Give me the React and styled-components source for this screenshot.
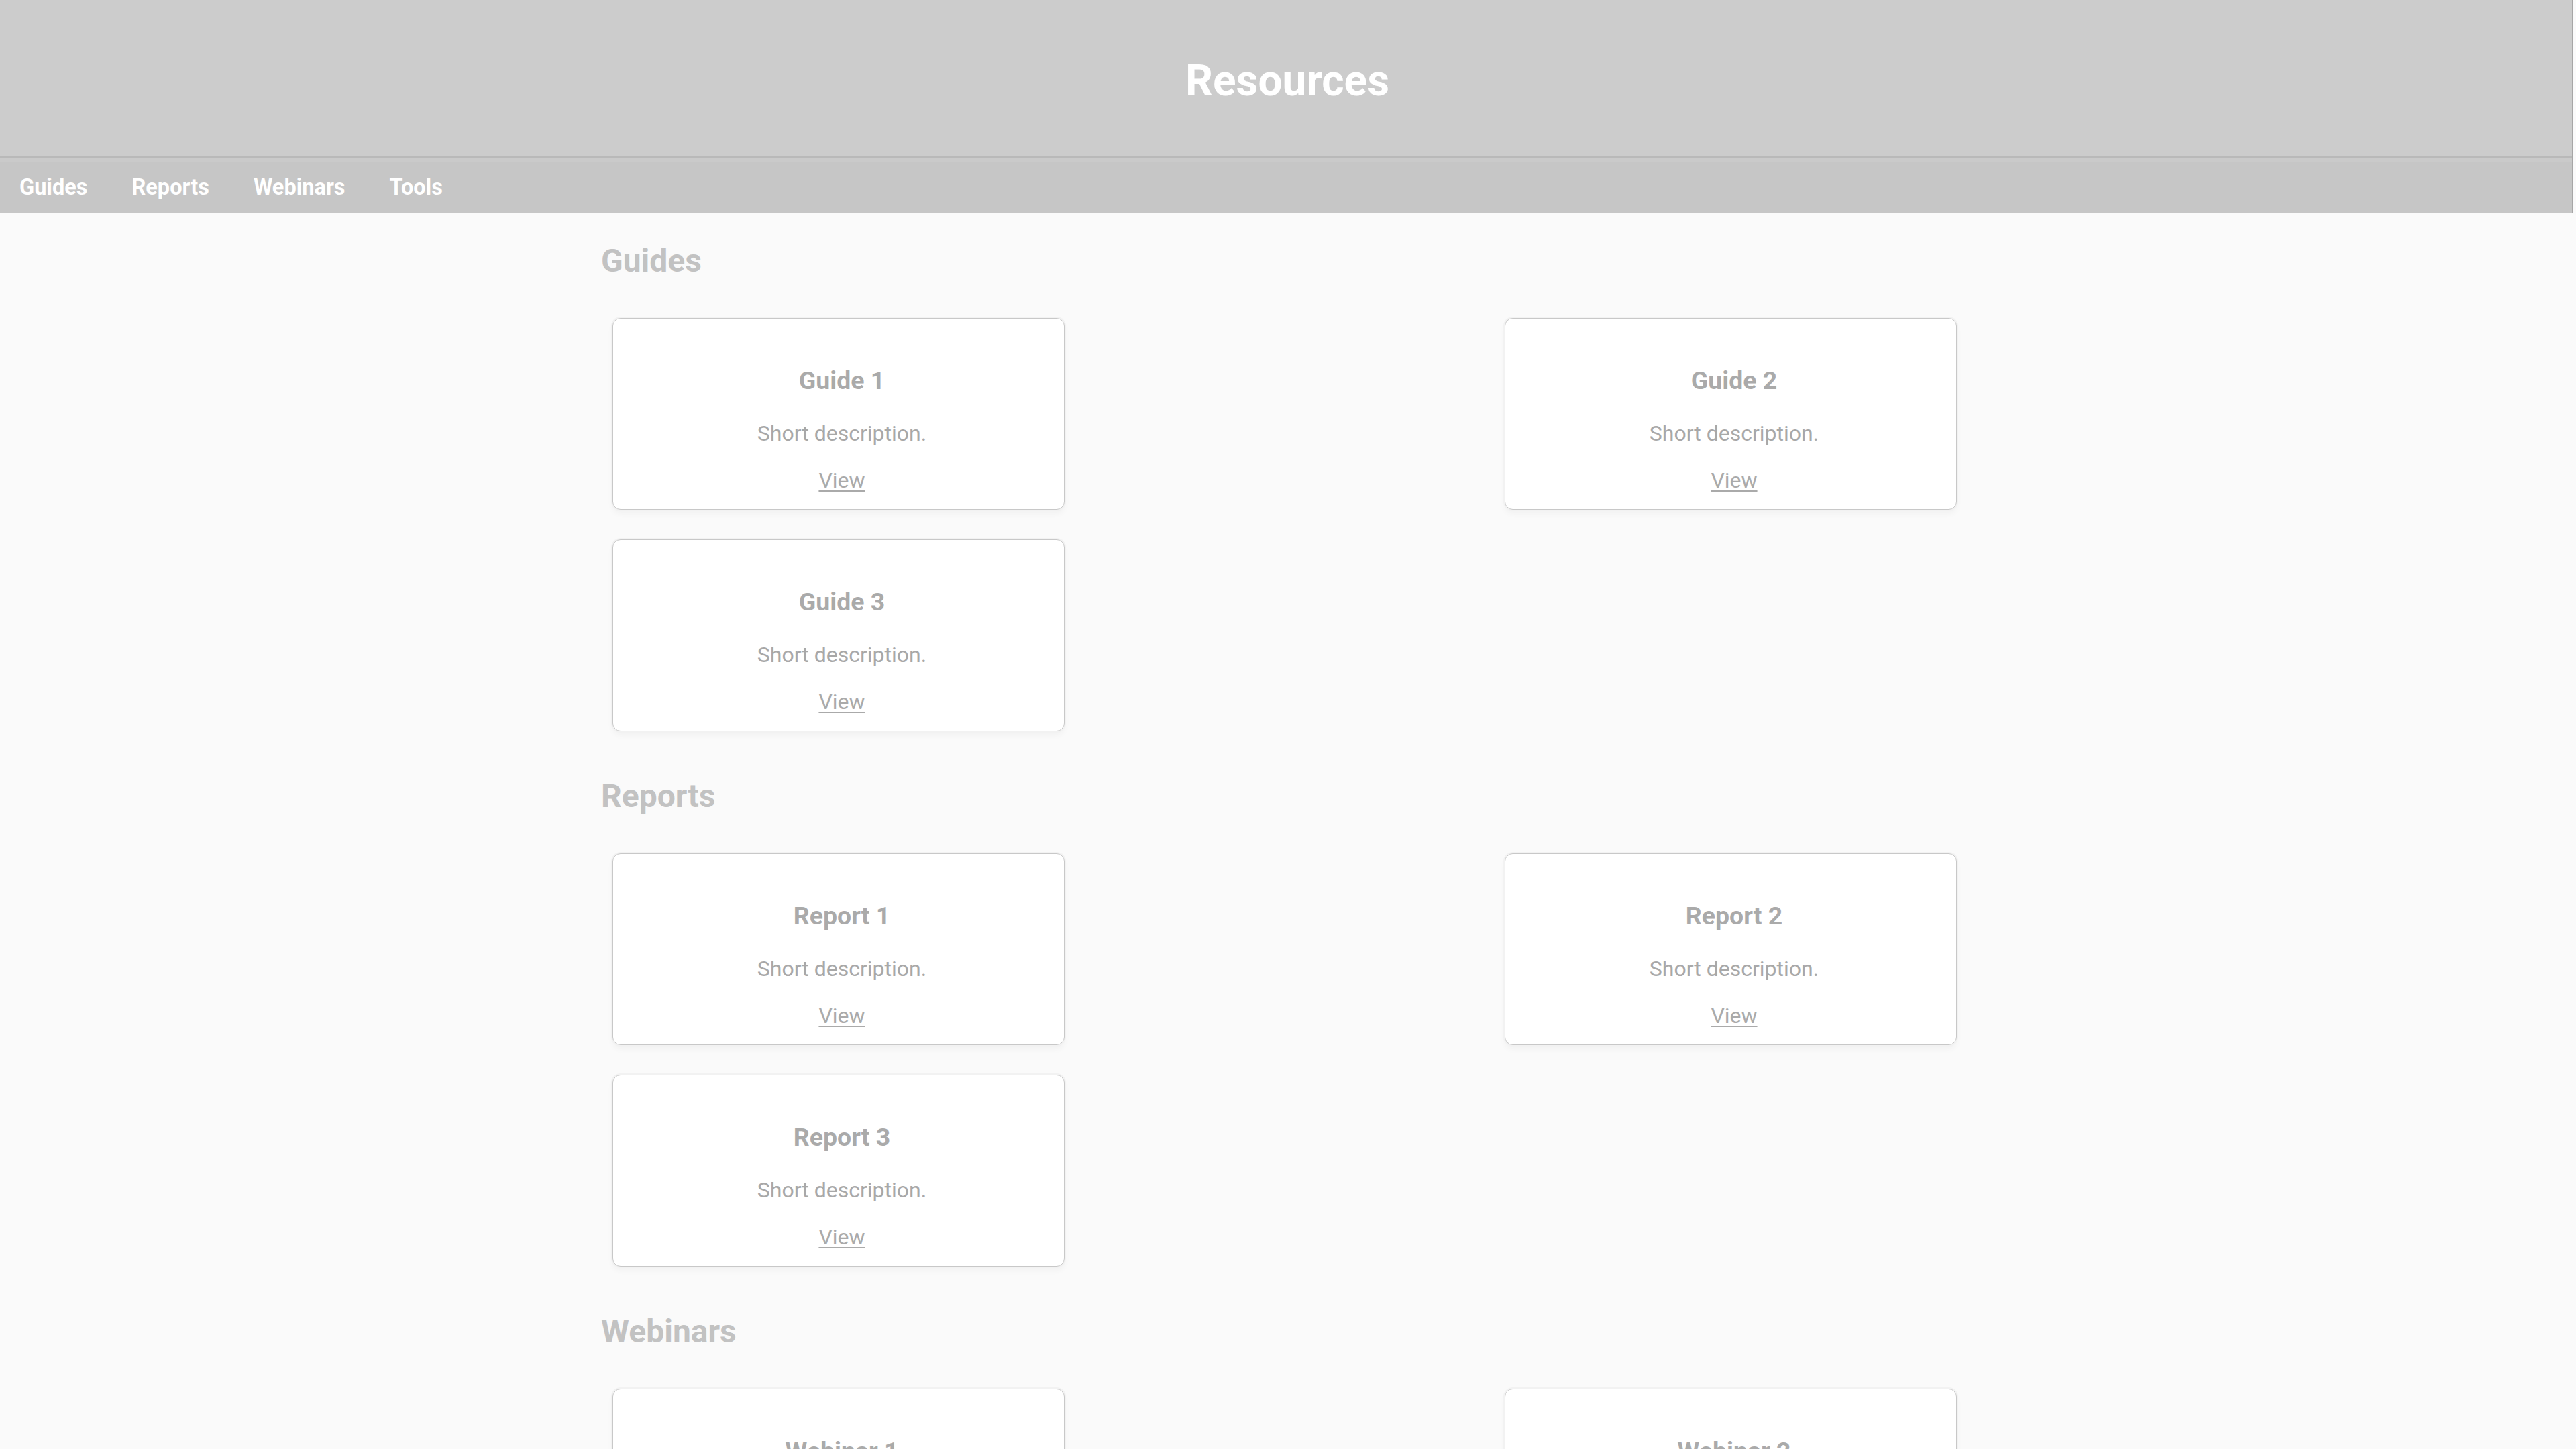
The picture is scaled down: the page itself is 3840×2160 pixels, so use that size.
import React from "react";
import styled, { createGlobalStyle } from "styled-components";

const GlobalStyle = createGlobalStyle`
  html, body {
    margin: 0;
    padding: 0;
    background: #fafafa;
    font-family: Roboto, "Liberation Sans", Arial, sans-serif;
  }
  * {
    box-sizing: border-box;
  }
`;

const sections = [
  { title: "Guides", item: "Guide" },
  { title: "Reports", item: "Report" },
  { title: "Webinars", item: "Webinar" },
  { title: "Tools", item: "Tool" },
];

const TopBar = styled.div`
  margin-right: 4px;
  border-right: 2px solid #a6a6a6;
`;

const Header = styled.header`
  display: flex;
  align-items: center;
  justify-content: center;
  height: 235px;
  padding-top: 7px;
  background: #cccccc;
  border-bottom: 2px solid #b9b9b9;

  h1 {
    margin: 0 0 0 4px;
    color: #ffffff;
    font-size: 64px;
    font-weight: 700;
  }
`;

const Nav = styled.nav`
  display: flex;
  align-items: center;
  gap: 66px;
  height: 83px;
  padding: 5px 29px 0;
  background: #c6c6c6;
  box-shadow: inset 0 6px 0 #cacaca;
`;

const NavLink = styled.a`
  color: #ffffff;
  font-size: 32.5px;
  font-weight: 700;
  text-decoration: none;
  cursor: pointer;
`;

const Main = styled.main`
  display: flex;
  flex-direction: column;
  gap: 68px;
  max-width: 2048px;
  margin: 0 auto;
  padding: 42px 0 80px;
`;

const Section = styled.section`
  h2 {
    margin: 0;
    color: #c2c2c2;
    font-size: 48px;
    font-weight: 700;
  }
`;

const CardGrid = styled.div`
  display: grid;
  grid-template-columns: repeat(2, 674px);
  justify-content: space-between;
  row-gap: 44px;
  margin-top: 57px;
  padding: 0 27px 0 17px;
`;

const Card = styled.div`
  display: flex;
  flex-direction: column;
  align-items: center;
  height: 286px;
  padding: 70px 20px 0 30px;
  background: #ffffff;
  border: 1px solid #c8c8c8;
  border-radius: 12px;
  box-shadow: 0 0 0 2px #f2f2f2, 0 6px 10px rgba(0, 0, 0, 0.035);

  h3 {
    margin: 0;
    color: #aaaaaa;
    font-size: 37.44px;
    font-weight: 700;
  }

  p {
    margin: 38px 0 0;
    color: #a8a8a8;
    font-size: 32px;
  }

  a {
    margin-top: 32px;
    color: #aaaaaa;
    font-size: 32px;
    text-decoration: underline;
    text-decoration-thickness: 2px;
    text-underline-offset: 4px;
    cursor: pointer;
  }
`;

const App = () => {
  return (
    <>
      <GlobalStyle />
      <TopBar>
        <Header>
          <h1>Resources</h1>
        </Header>
        <Nav>
          {sections.map((s) => (
            <NavLink key={s.title}>{s.title}</NavLink>
          ))}
        </Nav>
      </TopBar>

      <Main>
        {sections.map((s) => (
          <Section key={s.title}>
            <h2>{s.title}</h2>
            <CardGrid>
              {[1, 2, 3].map((n) => (
                <Card key={n}>
                  <h3>
                    {s.item} {n}
                  </h3>
                  <p>Short description.</p>
                  <a>View</a>
                </Card>
              ))}
            </CardGrid>
          </Section>
        ))}
      </Main>
    </>
  );
};

export default App;
